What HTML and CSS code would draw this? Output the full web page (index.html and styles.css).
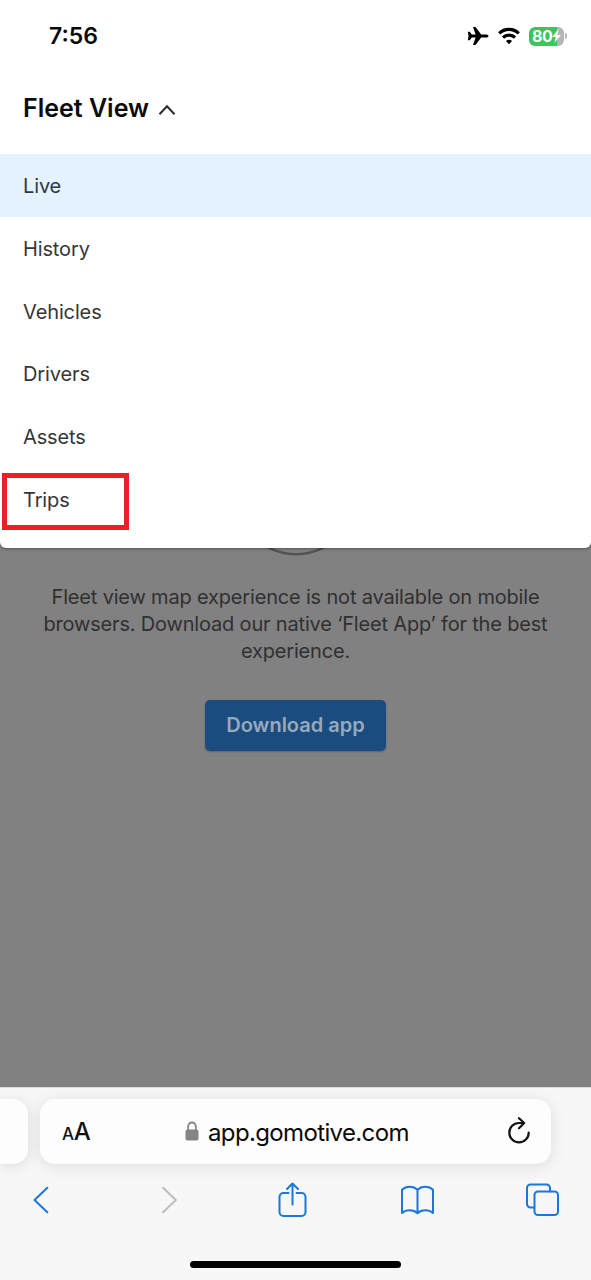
FILE: index.html
```html
<!DOCTYPE html>
<html lang="en">
<head>
<meta charset="utf-8">
<title>Fleet View</title>
<link rel="stylesheet" href="styles.css">
</head>
<body>
<div class="phone">
  <header class="status">
    <span class="clock">7:56</span>
    <div class="indicators">
      <svg class="plane" width="22" height="20" viewBox="0 0 22 20"><path d="M21.500 10c0 1-1.300 1.600-2.600 1.600h-4.700L8.500 19H6l2.600-7.400H4.800L2.800 14.200H.8l.7-4.200-.7-4.200h2l2 2.600h3.800L6 1h2.500l5.700 7.400h4.700c1.300 0 2.600.6 2.600 1.600z"/></svg>
      <svg class="wifi" width="24" height="18" viewBox="0 0 24 18"><path class="arc" d="M2.200 6.300a14 14 0 0 1 19.600 0M6 10.500a8.600 8.600 0 0 1 12 0"/><path d="M12 17.200l-3.100-3.100a4.500 4.500 0 0 1 6.200 0z"/></svg>
      <div class="battery"><span class="level">80</span>
        <svg class="bolt" width="9" height="14" viewBox="0 0 9 14"><path d="M6.700 0L0 8h3.700L2.300 14 9 5.900H5.300z"/></svg>
      </div>
      <span class="battery-tip"></span>
    </div>
  </header>

  <nav class="menu">
    <div class="menu-head">
      <h1 class="title">Fleet View</h1>
      <svg class="caret" width="18" height="12" viewBox="0 0 18 12"><path d="M1.500 10.200L9 2.200l7.500 8"/></svg>
    </div>
    <ul class="items">
      <li class="item active">Live</li>
      <li class="item">History</li>
      <li class="item">Vehicles</li>
      <li class="item">Drivers</li>
      <li class="item">Assets</li>
      <li class="item marked">Trips</li>
    </ul>
  </nav>

  <main class="content">
    <svg class="ring" width="64" height="8" viewBox="0 0 64 8"><path d="M1-2Q32 14.400 63-2"/></svg>
    <p class="message">Fleet view map experience is not available on mobile<br>browsers. Download our native ‘Fleet App’ for the best<br>experience.</p>
    <div class="download">Download app</div>
  </main>

  <footer class="browser">
    <div class="tabs">
      <div class="prev-tab"></div>
      <div class="address">
        <span class="text-size"><span class="small-a">A</span>A</span>
        <div class="host">
          <svg class="lock" width="14" height="20" viewBox="0 0 14 20"><rect x=".5" y="8.500" width="13" height="11" rx="2"/><path d="M3.200 9V5.500a3.800 4 0 0 1 7.600 0V9"/></svg>
          <span class="domain">app.gomotive.com</span>
        </div>
        <svg class="reload" width="24" height="28" viewBox="0 0 24 28"><path d="M17.200 6H12a9.700 9.700 0 1 0 9.700 9.700M12 1.200l5.200 4.800-5.200 5.200"/></svg>
      </div>
    </div>
    <div class="toolbar">
      <svg class="tool" width="34" height="36" viewBox="0 0 34 36"><path d="M23.300 5.800L10.500 18l12.800 12.200"/></svg>
      <svg class="tool disabled" width="34" height="36" viewBox="0 0 34 36"><path d="M13 5.800L25.800 18 13 30.200"/></svg>
      <svg class="tool" width="34" height="36" viewBox="0 0 34 36"><path d="M13.500 11h-5A4 4 0 0 0 4.500 15v15a4 4 0 0 0 4 4h18a4 4 0 0 0 4-4V15a4 4 0 0 0-4-4h-5M17.500 22.500V1.500M12 7l5.500-5.500L23 7"/></svg>
      <svg class="tool" width="34" height="36" viewBox="0 0 34 36"><path d="M16.500 7.800C12.500 3.600 5 3.600 1 7.800V31C5 27.300 12.500 27.300 16.500 31.200 20.500 27.300 28 27.300 32 31V7.800C28 3.600 20.500 3.600 16.500 7.800zV31"/></svg>
      <svg class="tool" width="34" height="36" viewBox="0 0 34 36"><path d="M8 25.500H4.500A3.500 3.500 0 0 1 1 22V6A3.500 3.500 0 0 1 4.500 2.500h16A3.500 3.500 0 0 1 24 6V9.500"/><rect x="8.500" y="9.500" width="23.500" height="23.500" rx="3.500"/></svg>
    </div>
    <div class="home"></div>
  </footer>
</div>
</body>
</html>
```
FILE: styles.css
```css
*, *::after { box-sizing: border-box; }
body { margin: 0; background: #fff; font-family: Inter, "Liberation Sans", sans-serif; }
.phone { width: 591px; height: 1280px; display: flex; flex-direction: column; overflow: hidden; }
svg { display: block; flex: none; }

.status { height: 70px; flex: none; display: flex; justify-content: space-between; align-items: flex-start; padding: 22px 24px 0 49px; position: relative; z-index: 2; background: #fff; }
.clock { font-size: 23px; font-weight: 600; line-height: 28px; color: #080808; }
.indicators { display: flex; align-items: center; height: 28px; }
.wifi { margin-left: 8px; }
.wifi .arc { fill: none; stroke: #000; stroke-width: 3.200; }
.battery { margin-left: 8px; width: 35px; height: 19px; border-radius: 6px; background: linear-gradient(90deg, #3ec45b 28px, #b5b5b7 28px); display: flex; align-items: center; padding-left: 3px; }
.level { color: #fff; font-size: 16px; font-weight: 700; line-height: 19px; letter-spacing: -0.500px; }
.bolt { fill: #fff; }
.battery-tip { width: 2px; height: 6px; margin-left: 1px; border-radius: 0 2px 2px 0; background: #b5b5b7; }

.menu { height: 478px; flex: none; background: #fff; border-radius: 0 0 6px 6px; box-shadow: 0 1px 3px rgba(0, 0, 0, .35); position: relative; z-index: 1; }
.menu-head { height: 84px; display: flex; align-items: center; padding: 0 23px 8px; gap: 9px; }
.title { margin: 0; font-size: 25px; line-height: 32px; font-weight: 600; color: #0c0c0c; }
.caret { fill: none; stroke: #2c2c2c; stroke-width: 2; margin-top: 4px; }
.items { list-style: none; margin: 0; padding: 0; }
.item { height: 62.800px; padding: 1px 23px 0; font-size: 20px; line-height: 63px; letter-spacing: -0.130px; color: #353638; position: relative; }
.item.active { background: #e4f3ff; color: #2d3942; }
.item.marked::after { content: ""; position: absolute; left: 2px; top: 5px; width: 127px; height: 57px; border: 5px solid #ea1f27; }

.content { flex: none; background: #818181; margin-top: -8px; padding-top: 8px; height: 547px; display: flex; flex-direction: column; align-items: center; }
.ring path { fill: none; stroke: #535353; stroke-width: 2.500; }
.message { margin: 28px 0 0; font-size: 20px; line-height: 27px; letter-spacing: -0.180px; text-align: center; color: #303030; white-space: nowrap; }
.download { margin-top: 35px; width: 181px; height: 51px; border-radius: 5px; background: #1b4c7f; color: #98a9bb; font-size: 20px; font-weight: 600; line-height: 51px; text-align: center; box-shadow: 0 1px 2px rgba(0, 0, 0, .25); }

.browser { height: 193px; flex: none; background: #f7f7f7; border-top: 1px solid #dcdcdc; display: flex; flex-direction: column; overflow: hidden; }
.tabs { display: flex; gap: 12px; padding-top: 11px; height: 76px; flex: none; }
.prev-tab { height: 65px; width: 28px; border-radius: 0 15px 15px 0; background: #fdfdfd; box-shadow: 0 2px 16px rgba(0, 0, 0, .11); }
.address { width: 511px; height: 65px; border-radius: 15px; background: #fdfdfd; box-shadow: 0 2px 16px rgba(0, 0, 0, .11); display: flex; align-items: center; padding: 0 20px 0 22px; }
.text-size { font-size: 24px; font-weight: 500; color: #111; line-height: 30px; width: 123px; padding-top: 3px; letter-spacing: -0.200px; }
.small-a { font-size: 17px; }
.host { display: flex; align-items: center; gap: 9px; flex: 1; }
.lock { fill: #858585; margin-top: -2px; }
.lock path { fill: none; stroke: #858585; stroke-width: 1.800; }
.domain { font-size: 24px; line-height: 30px; letter-spacing: -0.640px; color: #0a0a0a; padding-top: 2px; }
.reload { fill: none; stroke: #111; stroke-width: 2.200; stroke-linecap: round; stroke-linejoin: round; margin-top: -1px; }
.toolbar { display: flex; justify-content: space-between; padding: 18px 31px 0 24px; }
.tool { fill: none; stroke: #1b76de; stroke-width: 2; stroke-linecap: round; stroke-linejoin: round; }
.tool.disabled { stroke: #bdbdbd; }
.home { width: 211px; height: 7px; border-radius: 4px; background: #000; margin: 43px 0 0 190px; flex: none; }
```
